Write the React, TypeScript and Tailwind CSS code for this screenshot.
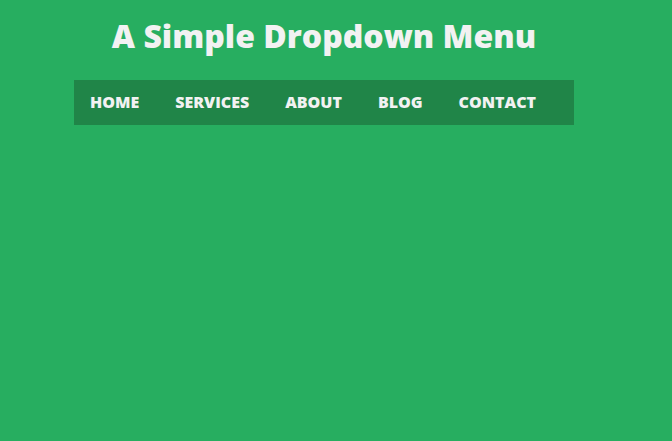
export default function App() {
  return (
    <div className="min-h-[441px] w-full bg-[#27ae60] pt-[16px]" style={{ fontFamily: '"Open Sans", sans-serif' }}>
      <div className="ml-[74px] w-[500px]">
        <h1 className="text-center text-[32px] font-extrabold leading-[40px] text-[#f2f2f2]">A Simple Dropdown Menu</h1>
        <nav className="mt-[24px] flex h-[45px] items-center bg-[#208548] px-[16px] pb-[2px]">
          <ul className="flex items-center gap-[36px] text-[16px] font-extrabold uppercase text-[#f2f2f2]">
            <li>Home</li>
            <li>Services</li>
            <li>About</li>
            <li>Blog</li>
            <li>Contact</li>
          </ul>
        </nav>
      </div>
    </div>
  );
}
